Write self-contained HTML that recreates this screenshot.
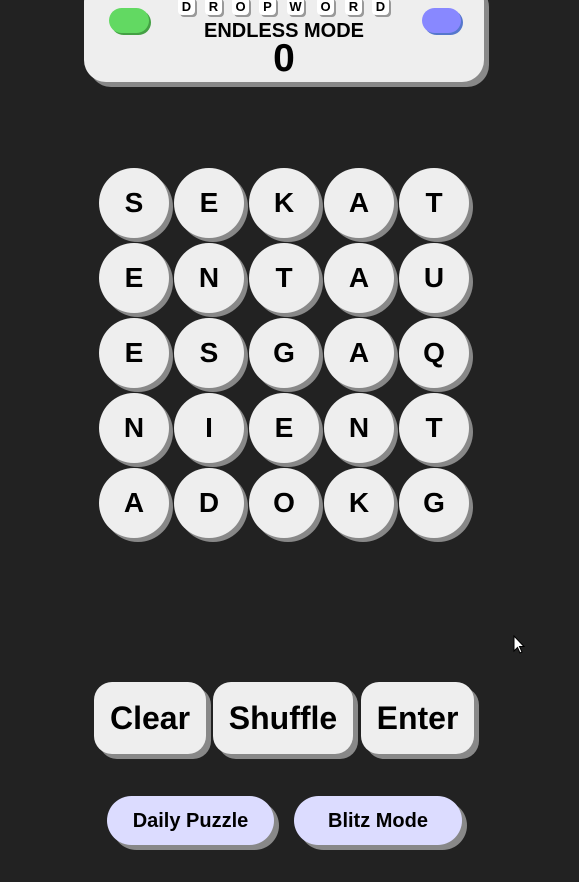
<!DOCTYPE html>
<html><head><style>
body{margin:0;width:579px;height:882px;background:#222;font-family:"Liberation Sans",Arial,sans-serif;position:relative;overflow:hidden}
.a{position:absolute}
.panel{left:84px;top:-20px;width:400px;height:102px;background:#eee;border-radius:22px;box-shadow:5px 5px 0 #888}
.t{position:absolute;top:-3px;width:17px;height:18px;background:#fff;border-radius:4px;box-shadow:2px 2px 0 #999;font-weight:bold;font-size:13px;text-align:center;line-height:19px;color:#000}
.c{position:absolute;width:70px;height:70px;border-radius:50%;background:#eee;box-shadow:4px 4px 0 #888;text-align:center;line-height:70px;font-weight:bold;font-size:28px;color:#000}
.b{position:absolute;top:682px;height:72px;background:#eee;border-radius:18px;box-shadow:5px 5px 0 #888;text-align:center;line-height:72px;font-weight:bold;font-size:32px;color:#000}
.p{position:absolute;top:796px;height:49px;background:#dcdcff;border-radius:25px;box-shadow:5px 5px 0 #888;text-align:center;line-height:50px;font-weight:bold;font-size:20px;color:#000}
</style></head><body>
<div class="a panel"></div>
<div class="a" style="left:109px;top:8px;width:40px;height:25px;border-radius:13px;background:#62d962;box-shadow:2px 2px 0 #44a044"></div>
<div class="a" style="left:422px;top:8px;width:39px;height:25px;border-radius:13px;background:#8888ff;box-shadow:2px 2px 0 #5577cc"></div>
<div class="t" style="left:178px">D</div><div class="t" style="left:205px">R</div><div class="t" style="left:232px">O</div><div class="t" style="left:259px">P</div><div class="t" style="left:287px">W</div><div class="t" style="left:317px">O</div><div class="t" style="left:345px">R</div><div class="t" style="left:372px">D</div>
<div class="a" style="left:84px;width:400px;top:20px;text-align:center;font-weight:bold;font-size:20px;line-height:22px">ENDLESS MODE</div>
<div class="a" style="left:84px;width:400px;top:38px;text-align:center;font-weight:bold;font-size:39px;line-height:42px">0</div>
<div id="g"></div>
<script>
var L=["SEKAT","ENTAU","ESGAQ","NIENT","ADOKG"],h="";
for(var r=0;r<5;r++)for(var c=0;c<5;c++)h+='<div class="c" style="left:'+(99+75*c)+'px;top:'+(168+75*r)+'px">'+L[r][c]+'</div>';
document.getElementById('g').innerHTML=h;
</script>
<div class="b" style="left:94px;width:112px">Clear</div>
<div class="b" style="left:213px;width:140px">Shuffle</div>
<div class="b" style="left:361px;width:113px">Enter</div>
<div class="p" style="left:107px;width:167px">Daily Puzzle</div>
<div class="p" style="left:294px;width:168px">Blitz Mode</div>
<svg class="a" style="left:513px;top:635px" width="13" height="20" viewBox="0 0 13 20"><path d="M1 1 L1 16 L4.5 12.5 L7 18 L9 17 L6.5 11.5 L11 11.5 Z" fill="#fff" stroke="#000" stroke-width="1"/></svg>
</body></html>
